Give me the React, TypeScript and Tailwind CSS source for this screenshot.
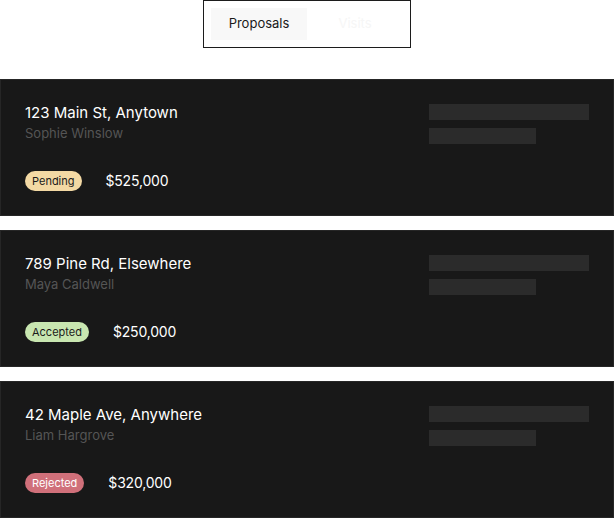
import React from "react";

type Proposal = {
  address: string;
  client: string;
  status: "Pending" | "Accepted" | "Rejected";
  price: string;
};

const proposals: Proposal[] = [
  { address: "123 Main St, Anytown", client: "Sophie Winslow", status: "Pending", price: "$525,000" },
  { address: "789 Pine Rd, Elsewhere", client: "Maya Caldwell", status: "Accepted", price: "$250,000" },
  { address: "42 Maple Ave, Anywhere", client: "Liam Hargrove", status: "Rejected", price: "$320,000" },
];

const badgeStyles: Record<Proposal["status"], string> = {
  Pending: "bg-[#f3d9a4] text-[#1a1a1a]",
  Accepted: "bg-[#c8e6b0] text-[#1a1a1a]",
  Rejected: "bg-[#d0707a] text-white",
};

const ProposalCard = ({ p }: { p: Proposal }) => {
  return (
    <div className="h-[137px] border border-[#262626] bg-[#181818] flex flex-row justify-between pl-[24px] pr-[24px] pt-[23px]">
      <div className="flex flex-col">
        <div className="text-[15px] leading-[20px] text-white">{p.address}</div>
        <div className="text-[13px] leading-[17px] mt-[2px] text-[#555555]">{p.client}</div>
        <div className="flex flex-row items-center mt-[28px] gap-[24px]">
          <span className={`h-[20px] px-[7px] rounded-full text-[11px] leading-[20px] ${badgeStyles[p.status]}`}>
            {p.status}
          </span>
          <span className="text-[14px] tracking-[-0.2px] text-white">{p.price}</span>
        </div>
      </div>
      <div className="flex flex-col gap-[8px] pt-[1px]">
        <div className="w-[160px] h-[16px] bg-[#2b2b2b]" />
        <div className="w-[107px] h-[16px] bg-[#2b2b2b]" />
      </div>
    </div>
  );
};

export default function App() {
  return (
    <div className="w-[614px] h-[518px] bg-white overflow-hidden" style={{ fontFamily: "Inter, 'Liberation Sans', sans-serif" }}>
      <div className="mx-auto w-[208px] h-[48px] border border-[#1c1c1c] flex flex-row items-center px-[7px]">
        <div className="w-[96px] h-[32px] bg-[#f8f8f8] flex items-center justify-center text-[13px] text-[#1a1a1a]">
          Proposals
        </div>
        <div className="w-[96px] h-[32px] flex items-center justify-center text-[13px] text-[#f6f6f6]">
          Visits
        </div>
      </div>
      <div className="mt-[31px] flex flex-col gap-[14px]">
        {proposals.map((p) => (
          <ProposalCard key={p.address} p={p} />
        ))}
      </div>
    </div>
  );
}
